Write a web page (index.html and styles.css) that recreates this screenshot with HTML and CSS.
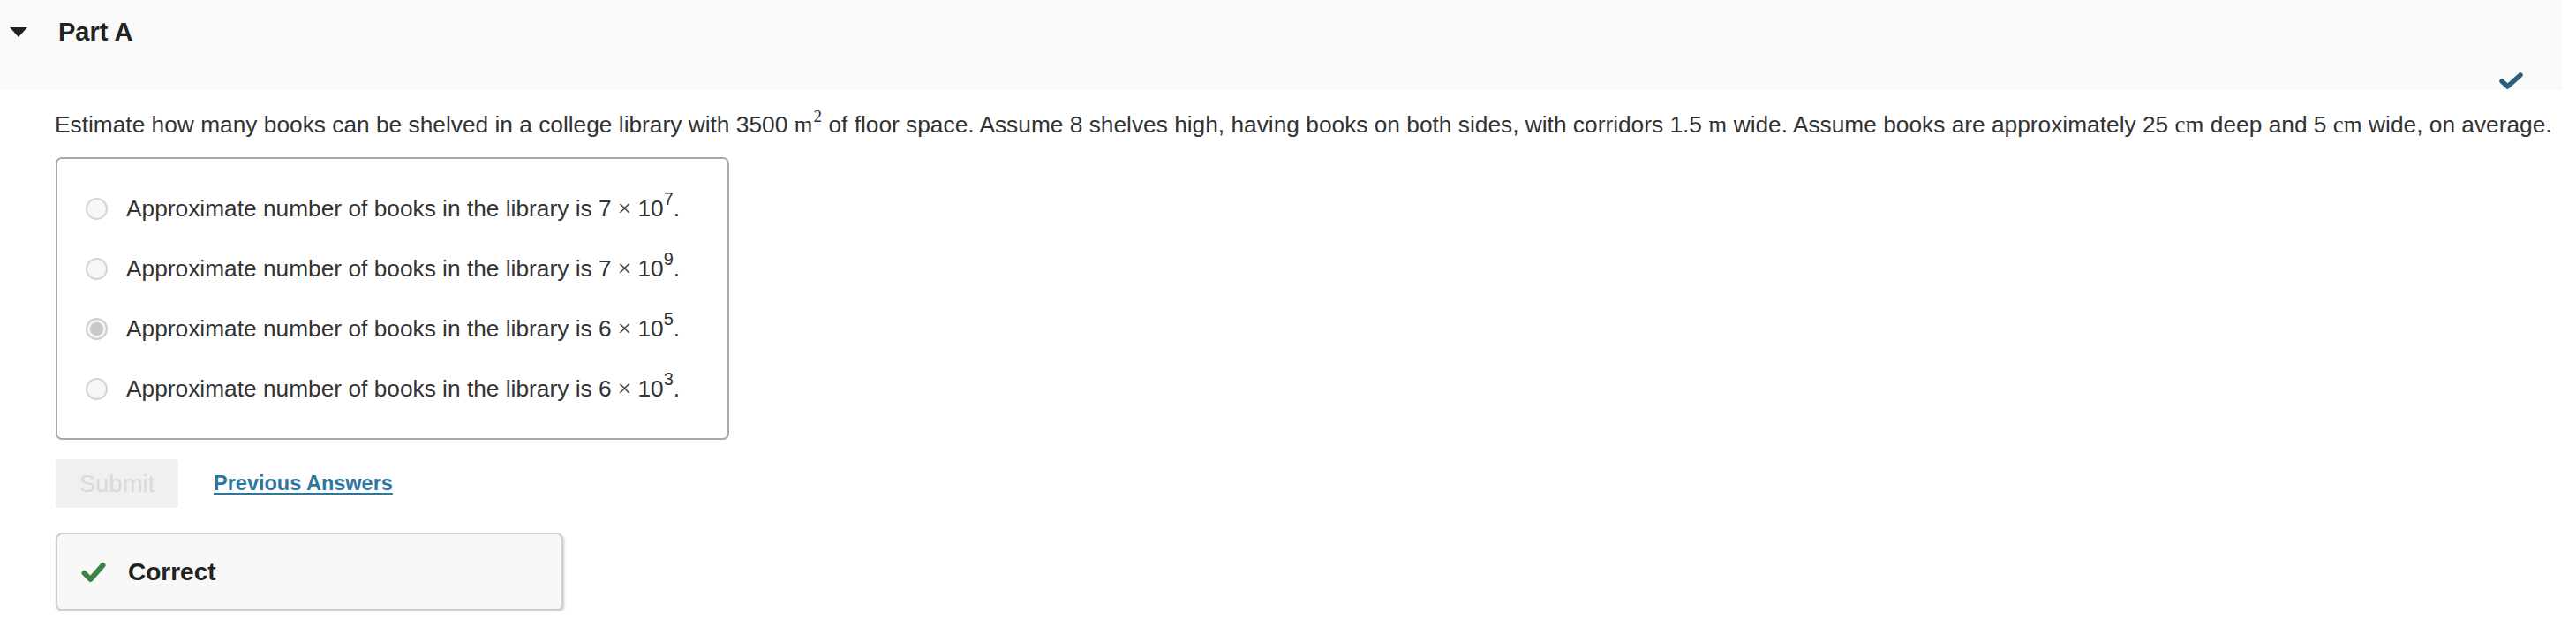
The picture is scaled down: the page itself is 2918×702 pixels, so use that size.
FILE: index.html
```html
<!DOCTYPE html>
<html lang="en">
<head>
<meta charset="utf-8">
<title>Part A</title>
<link rel="stylesheet" href="styles.css">
</head>
<body>
<div class="part-header">
  <span class="caret"></span>
  <h2 class="part-title">Part A</h2>
  <svg class="hdr-check" width="27" height="19" viewBox="0 0 27 19"><path d="M3 10 L9.5 16 L24 3" fill="none" stroke="#2a5f7b" stroke-width="5.5" stroke-linecap="round" stroke-linejoin="round"/></svg>
</div>
<p class="question">Estimate how many books can be shelved in a college library with 3500&nbsp;<span class="unit">m</span><sup class="usup">2</sup> of floor space. Assume 8 shelves high, having books on both sides, with corridors 1.5&nbsp;<span class="unit">m</span> wide. Assume books are approximately 25&nbsp;<span class="unit">cm</span> deep and 5&nbsp;<span class="unit">cm</span> wide, on average.</p>
<div class="choices">
  <label class="choice"><span class="radio"></span><span class="ctext">Approximate number of books in the library is 7<span class="times">×</span>10<sup class="exp">7</sup>.</span></label>
  <label class="choice"><span class="radio"></span><span class="ctext">Approximate number of books in the library is 7<span class="times">×</span>10<sup class="exp">9</sup>.</span></label>
  <label class="choice"><span class="radio checked"></span><span class="ctext">Approximate number of books in the library is 6<span class="times">×</span>10<sup class="exp">5</sup>.</span></label>
  <label class="choice"><span class="radio"></span><span class="ctext">Approximate number of books in the library is 6<span class="times">×</span>10<sup class="exp">3</sup>.</span></label>
</div>
<div class="actions">
  <button class="submit" disabled>Submit</button>
  <a class="prev" href="#">Previous Answers</a>
</div>
<div class="feedback">
  <svg class="ok" width="28" height="24" viewBox="0 0 28 24"><path d="M3.5 13 L10.5 20 L24.5 4" fill="none" stroke="#3b8442" stroke-width="6" stroke-linecap="round" stroke-linejoin="round"/></svg>
  <span class="ok-text">Correct</span>
</div>
</body>
</html>
```

FILE: styles.css
```css
body {
  margin: 0;
  font-family: "Liberation Sans", Arial, sans-serif;
  color: #333;
  background: #fff;
}

.part-header {
  display: flex;
  align-items: flex-start;
  height: 102px;
  margin-right: 16px;
  background: #f9f9f9;
}

.caret {
  width: 0;
  height: 0;
  margin: 31px 0 0 11px;
  border-left: 10.5px solid transparent;
  border-right: 10.5px solid transparent;
  border-top: 11px solid #222;
}

.part-title {
  margin: 20px 0 0 35px;
  font-size: 29px;
  line-height: 33px;
  font-weight: bold;
  color: #222;
}

.hdr-check {
  margin-left: auto;
  margin-right: 44px;
  align-self: flex-end;
  margin-bottom: 1px;
}

.question {
  margin: 24px 0 0 62px;
  font-size: 26.3px;
  line-height: 30px;
  white-space: nowrap;
}

.unit {
  font-family: "Liberation Serif", "DejaVu Serif", serif;
  font-size: 27px;
}

.usup {
  font-family: "Liberation Serif", "DejaVu Serif", serif;
  font-size: 19px;
  line-height: 0;
  vertical-align: 12px;
  margin-left: 1px;
}

.choices {
  display: flex;
  flex-direction: column;
  margin: 22px 0 0 63px;
  width: 763px;
  box-sizing: border-box;
  padding: 22px 0;
  border: 2px solid #a9a9a9;
  border-radius: 7px;
}

.choice {
  display: flex;
  align-items: center;
  height: 68px;
  font-size: 26.3px;
}

.radio {
  width: 21px;
  height: 21px;
  margin-left: 32px;
  border: 2px solid #d4d4d4;
  border-radius: 50%;
  background: #f7f7f7;
  box-sizing: content-box;
  flex: none;
}

.radio.checked {
  background: radial-gradient(circle, #c8c8c8 0 7px, #f3f3f3 8px);
  border-color: #cdcdcd;
}

.ctext {
  margin-left: 21px;
  white-space: nowrap;
}

.times {
  font-family: "Liberation Serif", "DejaVu Serif", serif;
  font-size: 28px;
  color: #444;
  margin: 0 7px;
}

.exp {
  font-size: 20px;
  line-height: 0;
  vertical-align: 13px;
}

.actions {
  display: flex;
  align-items: center;
  margin: 22px 0 0 63px;
  gap: 40px;
}

.submit {
  width: 139px;
  height: 55px;
  border: none;
  border-radius: 4px;
  background: #f0f0f0;
  color: #d9d9d9;
  font-family: "Liberation Sans", Arial, sans-serif;
  font-size: 27.5px;
  padding: 0;
}

.prev {
  font-size: 23.5px;
  font-weight: bold;
  color: #2e76a0;
  text-decoration: underline;
  text-underline-offset: 3px;
  text-decoration-thickness: 2px;
}

.feedback {
  display: flex;
  align-items: center;
  margin: 28px 0 0 63px;
  width: 575px;
  height: 89px;
  box-sizing: border-box;
  border: 2px solid #cfcfcf;
  border-radius: 8px;
  background: #f8f8f8;
  box-shadow: 1px 2px 3px rgba(0, 0, 0, 0.22);
}

.ok {
  margin-left: 27px;
}

.ok-text {
  margin-left: 25px;
  font-size: 28px;
  font-weight: bold;
  color: #222;
}
```
